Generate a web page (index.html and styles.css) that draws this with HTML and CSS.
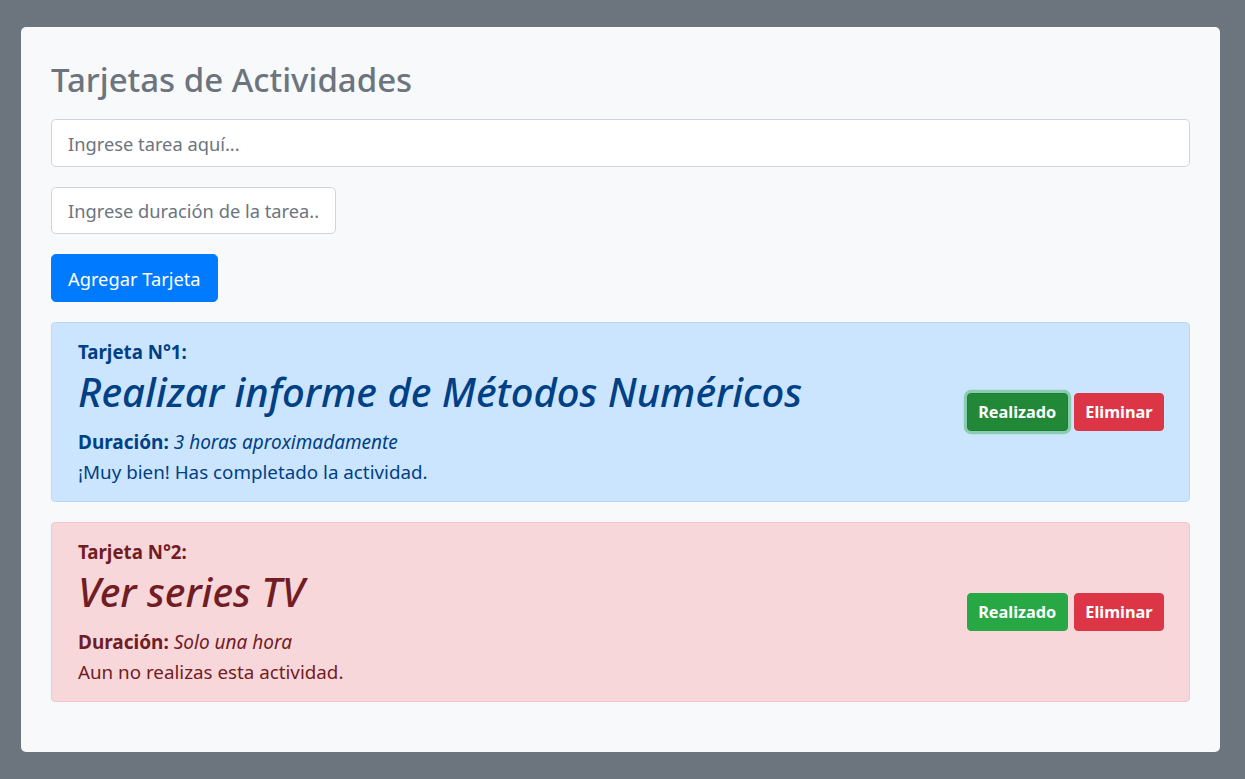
FILE: index.html
```html
<!DOCTYPE html>
<html lang="es">
<head>
<meta charset="utf-8">
<title>Tarjetas de Actividades</title>
<link rel="stylesheet" href="styles.css">
</head>
<body>
<main class="panel">
  <h2 class="page-title">Tarjetas de Actividades</h2>
  <input class="field field-wide" type="text" placeholder="Ingrese tarea aquí...">
  <input class="field field-short" type="text" placeholder="Ingrese duración de la tarea...">
  <button class="btn btn-primary btn-lg" type="button">Agregar Tarjeta</button>

  <div class="task task-done">
    <div class="task-body">
      <h5 class="task-num">Tarjeta N°1:</h5>
      <h1 class="task-title">Realizar informe de Métodos Numéricos</h1>
      <p class="task-dur"><strong>Duración:</strong> <em>3 horas aproximadamente</em></p>
      <p class="task-msg">¡Muy bien! Has completado la actividad.</p>
    </div>
    <div class="task-actions">
      <button class="btn btn-success is-focus" type="button">Realizado</button>
      <button class="btn btn-danger" type="button">Eliminar</button>
    </div>
  </div>

  <div class="task task-pending">
    <div class="task-body">
      <h5 class="task-num">Tarjeta N°2:</h5>
      <h1 class="task-title">Ver series TV</h1>
      <p class="task-dur"><strong>Duración:</strong> <em>Solo una hora</em></p>
      <p class="task-msg">Aun no realizas esta actividad.</p>
    </div>
    <div class="task-actions">
      <button class="btn btn-success" type="button">Realizado</button>
      <button class="btn btn-danger" type="button">Eliminar</button>
    </div>
  </div>
</main>
</body>
</html>
```
FILE: styles.css
```css
html, body {
  margin: 0;
  padding: 0;
}
body {
  background: #6c757d;
  font-family: "Noto Sans", "Open Sans", sans-serif;
  color: #212529;
  padding: 27px 25px 27px 21px;
}
.panel {
  background: #f8f9fa;
  border-radius: 5px;
  padding: 30px 30px 30px 30px;
  display: flex;
  flex-direction: column;
  align-items: flex-start;
}
.page-title {
  margin: 2px 0 18px 0;
  font-size: 33px;
  font-weight: 500;
  line-height: 42px;
  color: #6c757d;
  height: 42px;
}
.field {
  box-sizing: border-box;
  height: 48px;
  font-family: inherit;
  font-size: 18.3px;
  padding: 8px 16px;
  color: #495057;
  background: #fff;
  border: 1px solid #ced4da;
  border-radius: 4.8px;
  margin: 0 0 20px 0;
  outline: none;
}
.field::placeholder {
  color: #6c757d;
}
.field-wide {
  width: 100%;
}
.field-short {
  width: 285px;
  height: 47px;
  text-overflow: clip;
}
.btn {
  font-family: inherit;
  border: 1px solid transparent;
  border-radius: 4px;
  color: #fff;
  cursor: pointer;
}
.btn-primary {
  background: #007bff;
  border-color: #007bff;
}
.btn-lg {
  height: 48px;
  font-size: 18.3px;
  padding: 0 16px;
  border-radius: 4.8px;
  margin-bottom: 20px;
}
.task {
  box-sizing: border-box;
  width: 100%;
  border: 1px solid;
  border-radius: 4px;
  padding: 17px 25px 14px 26px;
  display: flex;
  align-items: center;
  justify-content: space-between;
  margin-bottom: 20px;
}
.task-done {
  background: #cce5ff;
  border-color: #b8daff;
  color: #004085;
}
.task-pending {
  background: #f8d7da;
  border-color: #f5c6cb;
  color: #721c24;
}
.task-num {
  margin: 0 0 3px 0;
  font-size: 18.7px;
  font-weight: 700;
  line-height: 24px;
}
.task-title {
  margin: 0 0 10px 0;
  font-size: 40px;
  font-style: italic;
  font-weight: 500;
  line-height: 50px;
}
.task-dur {
  margin: 0;
  font-size: 19px;
  line-height: 30px;
}
.task-msg {
  margin: 0;
  font-size: 18.8px;
  line-height: 30px;
}
.task-actions {
  display: flex;
  gap: 6px;
  margin-bottom: 3px;
}
.btn-success, .btn-danger {
  height: 38px;
  font-size: 16.3px;
  font-weight: 700;
  padding: 0 10.5px;
}
.btn-success {
  background: #28a745;
  border-color: #28a745;
}
.btn-success.is-focus {
  background: #218838;
  border-color: #1e7e34;
  box-shadow: 0 0 0 3.2px rgba(72, 180, 97, 0.5);
}
.btn-danger {
  background: #dc3545;
  border-color: #dc3545;
}
```
